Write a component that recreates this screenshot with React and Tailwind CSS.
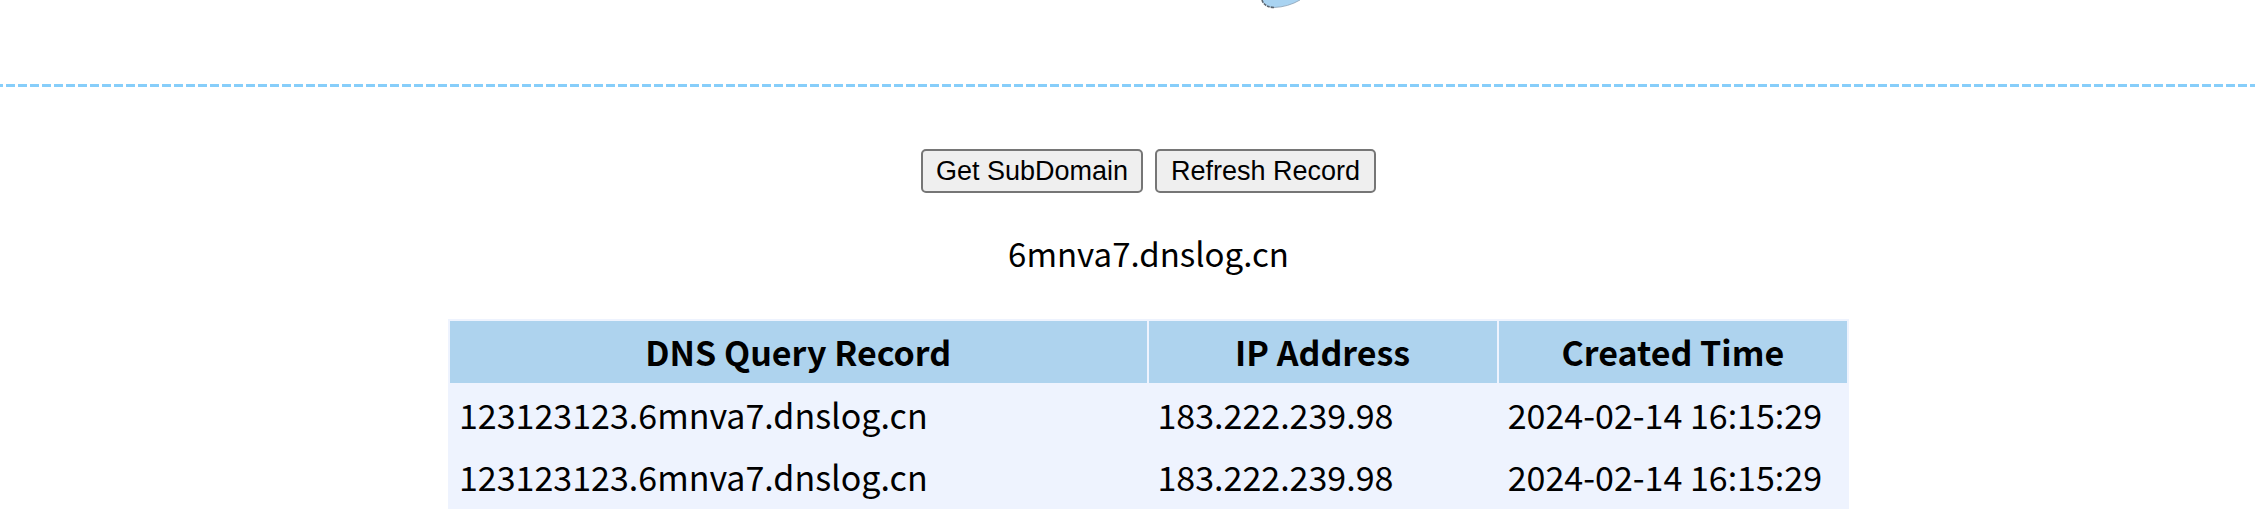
import React from 'react';

const records = [
  { query: '123123123.6mnva7.dnslog.cn', ip: '183.222.239.98', time: '2024-02-14 16:15:29' },
  { query: '123123123.6mnva7.dnslog.cn', ip: '183.222.239.98', time: '2024-02-14 16:15:29' },
];

const yahei = { fontFamily: '"Noto Sans CJK SC", "Noto Sans", sans-serif' };

const App = () => {
  return (
    <div className="w-[2255px] h-[509px] overflow-hidden bg-white text-black">
      {/* top banner, only the bottom edge of the logo is visible */}
      <div className="h-[84px] pl-[1256px]">
        <svg width="50" height="10" viewBox="0 0 50 10">
          <path d="M6 0 Q8 7 18 7.5 Q32 7 44 0 Z" fill="#a9d3f1" />
          <path d="M6 0 Q8 7 18 7.5" fill="none" stroke="#5b6570" strokeWidth="1.6" strokeDasharray="3 1" />
          <path d="M18 7.5 Q32 7 44 0" fill="none" stroke="#8aa0b4" strokeWidth="0.8" />
        </svg>
      </div>
      <div className="h-[3px] w-full bg-[repeating-linear-gradient(90deg,#87cefa_0_3px,transparent_3px_6px,#87cefa_6px_12px)]" />

      <div className="pl-[42px]">
        <div className="flex justify-center gap-[12px] mt-[62px]">
          <button
            className="h-[44px] w-[222px] bg-[#efefef] border-2 border-[#767676] rounded-[5px] text-[27px] leading-none text-black"
            style={{ fontFamily: '"Liberation Sans", Arial, sans-serif' }}
          >
            Get SubDomain
          </button>
          <button
            className="h-[44px] w-[221px] bg-[#efefef] border-2 border-[#767676] rounded-[5px] text-[27px] leading-none text-black"
            style={{ fontFamily: '"Liberation Sans", Arial, sans-serif' }}
          >
            Refresh Record
          </button>
        </div>

        <div className="mt-[40px] text-center text-[33px] leading-[40px]" style={yahei}>
          6mnva7.dnslog.cn
        </div>

        <table
          className="mx-auto mt-[46px] w-[1401px] table-fixed border-separate border-spacing-[2px] bg-[#eef3fe] text-[34px] whitespace-nowrap"
          style={yahei}
        >
          <thead>
            <tr>
              <th className="h-[62px] w-[696px] bg-[#aed3ee] font-bold leading-[40px]">DNS Query Record</th>
              <th className="h-[62px] w-[348px] bg-[#aed3ee] font-bold leading-[40px]">IP Address</th>
              <th className="h-[62px] w-[348px] bg-[#aed3ee] font-bold leading-[40px]">Created Time</th>
            </tr>
          </thead>
          <tbody>
            {records.map((r, i) => (
              <tr key={i}>
                <td className="h-[60px] px-[9px] bg-[#eef3fe] leading-[40px]">{r.query}</td>
                <td className="h-[60px] px-[9px] bg-[#eef3fe] leading-[40px]">{r.ip}</td>
                <td className="h-[60px] px-[9px] bg-[#eef3fe] leading-[40px]">{r.time}</td>
              </tr>
            ))}
          </tbody>
        </table>
      </div>
    </div>
  );
};

export default App;
